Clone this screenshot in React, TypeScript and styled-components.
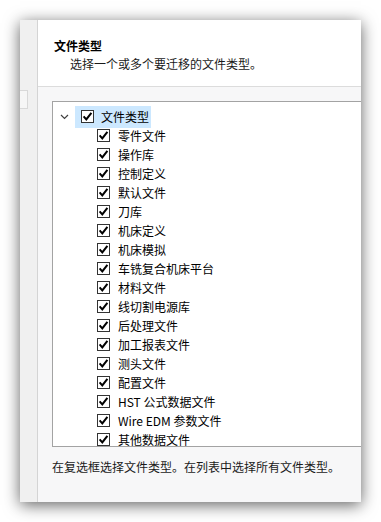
import React from "react";
import styled, { createGlobalStyle } from "styled-components";

const Global = createGlobalStyle`
  html, body { margin: 0; padding: 0; background: #ffffff; }
  body { font-family: "Microsoft YaHei", "Noto Sans CJK SC", "Noto Sans", sans-serif; }
`;

const Page = styled.div`
  width: 381px;
  height: 522px;
  padding: 20px 0 0 20px;
  box-sizing: border-box;
`;

const Window = styled.div`
  width: 341px;
  height: 482px;
  display: flex;
  overflow: hidden;
  background: #ffffff;
  box-shadow: 0 3px 15px rgba(0, 0, 0, 0.62);
`;

const Strip = styled.div`
  width: 18px;
  flex: none;
  background: #f0f0f0;
  border-right: 1px solid #d4d4d4;
  padding-top: 70px;
  box-sizing: border-box;
`;

const StripItem = styled.div`
  width: 8px;
  height: 19px;
  box-sizing: border-box;
  border: 1px solid #d8d8d8;
  border-left: none;
  background: #f6f6f6;
`;

const Main = styled.div`
  flex: 1;
  display: flex;
  flex-direction: column;
  min-width: 0;
`;

const Header = styled.div`
  height: 67px;
  box-sizing: border-box;
  padding: 17px 0 0 16px;
  background: #ffffff;
  border-bottom: 1px solid #dcdcdc;
`;

const Title = styled.div`
  font-size: 12px;
  line-height: 17px;
  font-weight: bold;
  color: #000;
`;

const Subtitle = styled.div`
  font-size: 12px;
  line-height: 17px;
  color: #1a1a1a;
  padding-left: 16px;
  margin-top: 1px;
`;

const Body = styled.div`
  flex: 1;
  background: #f7f7f8;
  padding: 14px 0 0 14px;
`;

const TreeBox = styled.div`
  width: 340px;
  height: 346px;
  box-sizing: border-box;
  border: 1px solid #a3a3a3;
  background: #ffffff;
  overflow: hidden;
  padding-top: 5px;
`;

const Row = styled.div<{ $indent: number }>`
  height: 19px;
  display: flex;
  align-items: center;
  padding-left: ${(p) => p.$indent}px;
`;

const Chevron = styled.div`
  width: 22px;
  height: 19px;
  display: flex;
  align-items: center;
  justify-content: center;
  flex: none;
`;

const Highlight = styled.div`
  display: flex;
  align-items: center;
  height: 22px;
  padding: 0 2px 0 6px;
  background: #cce8ff;
  gap: 7px;
`;

const Item = styled.div`
  display: flex;
  align-items: center;
  gap: 8px;
`;

const Box = styled.div`
  width: 13px;
  height: 13px;
  box-sizing: border-box;
  border: 1px solid #333333;
  background: #ffffff;
  display: flex;
  align-items: center;
  justify-content: center;
  flex: none;
`;

const Label = styled.span`
  font-size: 12px;
  line-height: 17px;
  color: #000;
  white-space: nowrap;
`;

const Footer = styled.div`
  font-size: 12px;
  line-height: 17px;
  color: #1a1a1a;
  margin-top: 11px;
  white-space: nowrap;
`;

const Check = () => (
  <Box>
    <svg width="11" height="11" viewBox="0 0 11 11">
      <path d="M1.6 5.4 L4.3 8.4 L9.4 1.8" fill="none" stroke="#000" strokeWidth="2" />
    </svg>
  </Box>
);

const items = [
  "零件文件",
  "操作库",
  "控制定义",
  "默认文件",
  "刀库",
  "机床定义",
  "机床模拟",
  "车铣复合机床平台",
  "材料文件",
  "线切割电源库",
  "后处理文件",
  "加工报表文件",
  "测头文件",
  "配置文件",
  "HST 公式数据文件",
  "Wire EDM 参数文件",
  "其他数据文件",
];

export default function App() {
  return (
    <>
      <Global />
      <Page>
        <Window>
          <Strip>
            <StripItem />
          </Strip>
          <Main>
            <Header>
              <Title>文件类型</Title>
              <Subtitle>选择一个或多个要迁移的文件类型。</Subtitle>
            </Header>
            <Body>
              <TreeBox>
                <Row $indent={0}>
                  <Chevron>
                    <svg width="9" height="6" viewBox="0 0 9 6">
                      <path d="M1 1 L4.5 4.5 L8 1" fill="none" stroke="#404040" strokeWidth="1.2" />
                    </svg>
                  </Chevron>
                  <Highlight>
                    <Check />
                    <Label>文件类型</Label>
                  </Highlight>
                </Row>
                {items.map((t) => (
                  <Row key={t} $indent={44}>
                    <Item>
                      <Check />
                      <Label>{t}</Label>
                    </Item>
                  </Row>
                ))}
              </TreeBox>
              <Footer>在复选框选择文件类型。在列表中选择所有文件类型。</Footer>
            </Body>
          </Main>
        </Window>
      </Page>
    </>
  );
}
